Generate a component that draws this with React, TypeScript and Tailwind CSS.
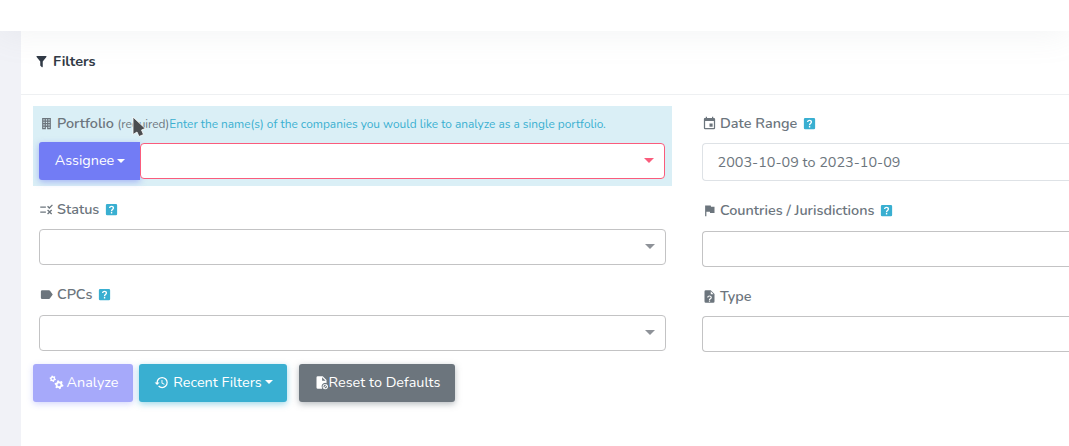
import type { ReactNode } from "react";

function Icon({ d, className = "" }: { d: string; className?: string }) {
  return (
    <svg viewBox="0 0 24 24" fill="currentColor" fillRule="evenodd" className={`shrink-0 ${className}`}>
      <path d={d} />
    </svg>
  );
}

const icons = {
  filter:
    "M14 12v7.88c.04.3-.06.62-.29.83-.39.39-1.02.39-1.41 0l-2.01-2.01a.99.99 0 0 1-.29-.83V12h-.03L4.21 4.62A1 1 0 0 1 4.38 3.22C4.57 3.08 4.78 3 5 3h14c.22 0 .43.08.62.22.43.34.51.97.17 1.4L14.03 12H14z",
  building:
    "M5 3v18h6v-3.5h2V21h6V3H5m2 2h2v2H7V5m4 0h2v2h-2V5m4 0h2v2h-2V5M7 9h2v2H7V9m4 0h2v2h-2V9m4 0h2v2h-2V9m-8 4h2v2H7v-2m4 0h2v2h-2v-2m4 0h2v2h-2v-2m-8 4h2v2H7v-2m8 0h2v2h-2v-2z",
  calendar:
    "M19 19H5V8h14M16 1v2H8V1H6v2H5c-1.11 0-2 .89-2 2v14a2 2 0 0 0 2 2h14a2 2 0 0 0 2-2V5a2 2 0 0 0-2-2h-1V1M17 12h-5v5h5v-5z",
  status:
    "M16.54 11L13 7.46l1.41-1.41 2.13 2.12 4.24-4.24 1.41 1.41M11 7H2v2h9V7m10 6.41L19.59 12 17 14.59 14.41 12 13 13.41 15.59 16 13 18.59 14.41 20 17 17.41 19.59 20 21 18.59 18.41 16M11 15H2v2h9v-2z",
  label:
    "M17.63 5.84A2 2 0 0 0 16 5H5a2 2 0 0 0-2 2v10a2 2 0 0 0 2 2h11c.67 0 1.27-.34 1.63-.85L22 12z",
  flag: "M14.4 6L14 4H5v17h2v-7h5.6l.4 2h7V6z",
  fileQuestion:
    "M14 2H6a2 2 0 0 0-2 2v16a2 2 0 0 0 2 2h12a2 2 0 0 0 2-2V8zM14 8.500V3.5L18.5 8.500zM11 18.500h2v2h-2zM8.300 13.500h1.900C10.200 12.500 11 11.900 12 11.900s1.800.7 1.800 1.600c0 1.500-2.800 1.500-2.800 4h2c0-1.500 2.700-1.800 2.700-4.100 0-1.800-1.600-3.200-3.700-3.200S8.300 11.500 8.300 13.500z",
  history:
    "M13.5 8H12v5l4.28 2.54.72-1.21-3.5-2.08zM13 3a9 9 0 0 0-9 9H1l3.96 4.03L9 12H6a7 7 0 1 1 7 7 6.9 6.9 0 0 1-4.93-2.07l-1.42 1.42A8.9 8.9 0 0 0 13 21a9 9 0 0 0 0-18z",
  help:
    "M5 3h14a2 2 0 0 1 2 2v14a2 2 0 0 1-2 2H5a2 2 0 0 1-2-2V5a2 2 0 0 1 2-2m6 13v2.2h2.2V16zM8 9.7h2.1c0-1.1.8-1.8 1.9-1.8s1.9.7 1.9 1.7c0 1.8-2.9 2-2.9 5.1h2.2c0-2.3 2.9-2.6 2.9-5.2C16.1 7.4 14.3 6 12 6S8 7.5 8 9.7z",
  fileCancel:
    "M14 2H6a2 2 0 0 0-2 2v16a2 2 0 0 0 2 2h7a6 6 0 0 1 7-9V8zM13 9V3.5L18.5 9zM18 14.2a4.3 4.3 0 1 0 0 8.6 4.3 4.3 0 0 0 0-8.6m0 1.5c.5 0 1 .1 1.4.4l-3.8 3.8A2.8 2.8 0 0 1 18 15.7m2.4 1.4a2.8 2.8 0 0 1-3.8 3.8z",
};

const gear = (cx: number, cy: number, r: number) => {
  let points = "";
  for (let i = 0; i < 24; i++) {
    const radius = i % 4 < 2 ? r : r * 0.74;
    const a = ((i + 0.5) * Math.PI) / 12;
    points += `${i ? "L" : "M"}${(cx + radius * Math.cos(a)).toFixed(2)} ${(cy + radius * Math.sin(a)).toFixed(2)}`;
  }
  const h = r * 0.34;
  return `${points}ZM${cx - h} ${cy}a${h} ${h} 0 1 0 ${2 * h} 0a${h} ${h} 0 1 0 ${-2 * h} 0Z`;
};

const cogs = gear(6, 6, 5.2) + gear(16, 15.5, 7.2);

function Label({ icon, help, children }: { icon: string; help?: boolean; children: ReactNode }) {
  return (
    <div className="flex h-5 items-center whitespace-nowrap text-[14.4px] font-semibold text-[#6c757d]">
      <Icon d={icon} className="-ml-[0.5px] mb-[2px] mr-[3.5px] size-[15px]" />
      {children}
      {help && <Icon d={icons.help} className="mb-px ml-[4.5px] size-[15px] text-[#39afd1]" />}
    </div>
  );
}

function Caret({ className = "" }: { className?: string }) {
  return (
    <svg viewBox="0 0 10 5" fill="currentColor" preserveAspectRatio="none" className={`shrink-0 ${className}`}>
      <path d="M0 0h10L5 5z" />
    </svg>
  );
}

function Select() {
  return (
    <div className="flex h-9 items-center justify-end rounded-[4px] border border-[#c3c3c4] bg-white pr-[10px]">
      <Caret className="mb-[2px] h-[5px] w-[10px] text-[#8e9298]" />
    </div>
  );
}

export default function App() {
  return (
    <div className="h-[446px] w-[1069px] overflow-hidden bg-[#f1f2f7] font-['Nunito','Lato',sans-serif]">
      <header className="relative h-[31px] bg-white shadow-[0_0_35px_0_rgba(154,161,171,0.15)]" />
      <main className="ml-[21px] h-[415px] w-[1048px] bg-white">
        <div className="flex h-16 items-center border-b border-[#eef0f2] pb-[3px] pl-[13px] text-[#313a46]">
          <Icon d={icons.filter} className="mr-[4px] size-[15px]" />
          <h2 className="text-[14.4px] font-bold leading-5">Filters</h2>
        </div>
        <div className="flex gap-[30px] pl-3 pt-[11px]">
          <section className="w-[639px] shrink-0">
            <div className="h-20 bg-[#daeff6] px-[6px] pt-2">
              <div className="relative flex items-center">
                <Label icon={icons.building}>Portfolio</Label>
                <span className="ml-[3.5px] whitespace-nowrap text-[11.88px] leading-4 text-[#6c757d]">(required)</span>
                <span className="whitespace-nowrap text-[11.88px] leading-4 text-[#39afd1]">Enter the name(s) of the companies you would like to analyze as a single portfolio.</span>
                <svg viewBox="0 0 14 22" className="absolute left-[92.5px] top-[2px] h-[22px] w-[14px]" fill="#4b4d50" stroke="white" strokeWidth="0.8">
                  <path d="M1 1v17.500l4-2.500 2 4.500 4.500-2-2-4.500 3.700-1.500z" />
                </svg>
              </div>
              <div className="mt-2 flex">
                <button className="flex h-[38px] w-[101px] shrink-0 items-center justify-center rounded-l-[3px] bg-[#727cf5] text-[14.4px] text-white shadow-[0_2px_6px_rgba(114,124,245,0.5)]">
                  <span className="ml-px">Assignee</span>
                  <Caret className="mb-px ml-[3px] h-1 w-2" />
                </button>
                <div className="mt-px flex h-9 w-[525px] items-center justify-end rounded-[4px] border border-[#fa5c7c] bg-white pr-[10px]">
                  <Caret className="mb-px h-[5px] w-[10px] text-[#fa5c7c]" />
                </div>
              </div>
            </div>
            <div className="px-[6px] pt-[14px]">
              <Label icon={icons.status} help>Status</Label>
              <div className="mt-[9px]"><Select /></div>
            </div>
            <div className="px-[6px] pt-5">
              <Label icon={icons.label} help>CPCs</Label>
              <div className="mt-[10px]"><Select /></div>
            </div>
            <div className="mt-[13px] flex text-[14.4px] text-white">
              <button className="flex h-[38px] w-[100px] items-center justify-center rounded-[3px] bg-[#a6a9fa] shadow-[0_2px_6px_rgba(114,124,245,0.3)]">
                <Icon d={cogs} className="mb-px ml-px mr-[3px] size-[15px]" />
                <span>Analyze</span>
              </button>
              <button className="ml-[6px] flex h-[38px] w-[148px] items-center justify-center whitespace-nowrap rounded-[3px] bg-[#39afd1] shadow-[0_2px_6px_rgba(57,175,209,0.5)]">
                <Icon d={icons.history} className="mb-[2px] ml-px mr-1 size-[15px]" />
                <span>Recent Filters</span>
                <Caret className="mb-[2px] ml-[3px] h-1 w-2" />
              </button>
              <button className="ml-3 flex h-[38px] w-[156px] items-center justify-center whitespace-nowrap rounded-[3px] bg-[#6c757d] shadow-[0_2px_6px_rgba(108,117,125,0.5)]">
                <Icon d={icons.fileCancel} className="mb-[2px] size-[15px]" />
                <span>Reset to Defaults</span>
              </button>
            </div>
          </section>
          <section className="w-[367px] shrink-0">
            <div className="pt-2">
              <Label icon={icons.calendar} help>Date Range</Label>
              <div className="mt-[9px] flex h-[38px] items-center rounded-l-[4px] border border-r-0 border-[#dee2e6] pl-[14.5px] pt-px text-[14.4px] text-[#6c757d]">
                <span className="whitespace-nowrap">2003-10-09 to 2023-10-09</span>
              </div>
            </div>
            <div className="pt-5">
              <Label icon={icons.flag} help>Countries / Jurisdictions</Label>
              <div className="mt-[10px] h-9 rounded-l-[4px] border border-r-0 border-[#c3c3c4]" />
            </div>
            <div className="pt-5">
              <Label icon={icons.fileQuestion}>Type</Label>
              <div className="mt-[9px] h-9 rounded-l-[4px] border border-r-0 border-[#c3c3c4]" />
            </div>
          </section>
        </div>
      </main>
    </div>
  );
}
